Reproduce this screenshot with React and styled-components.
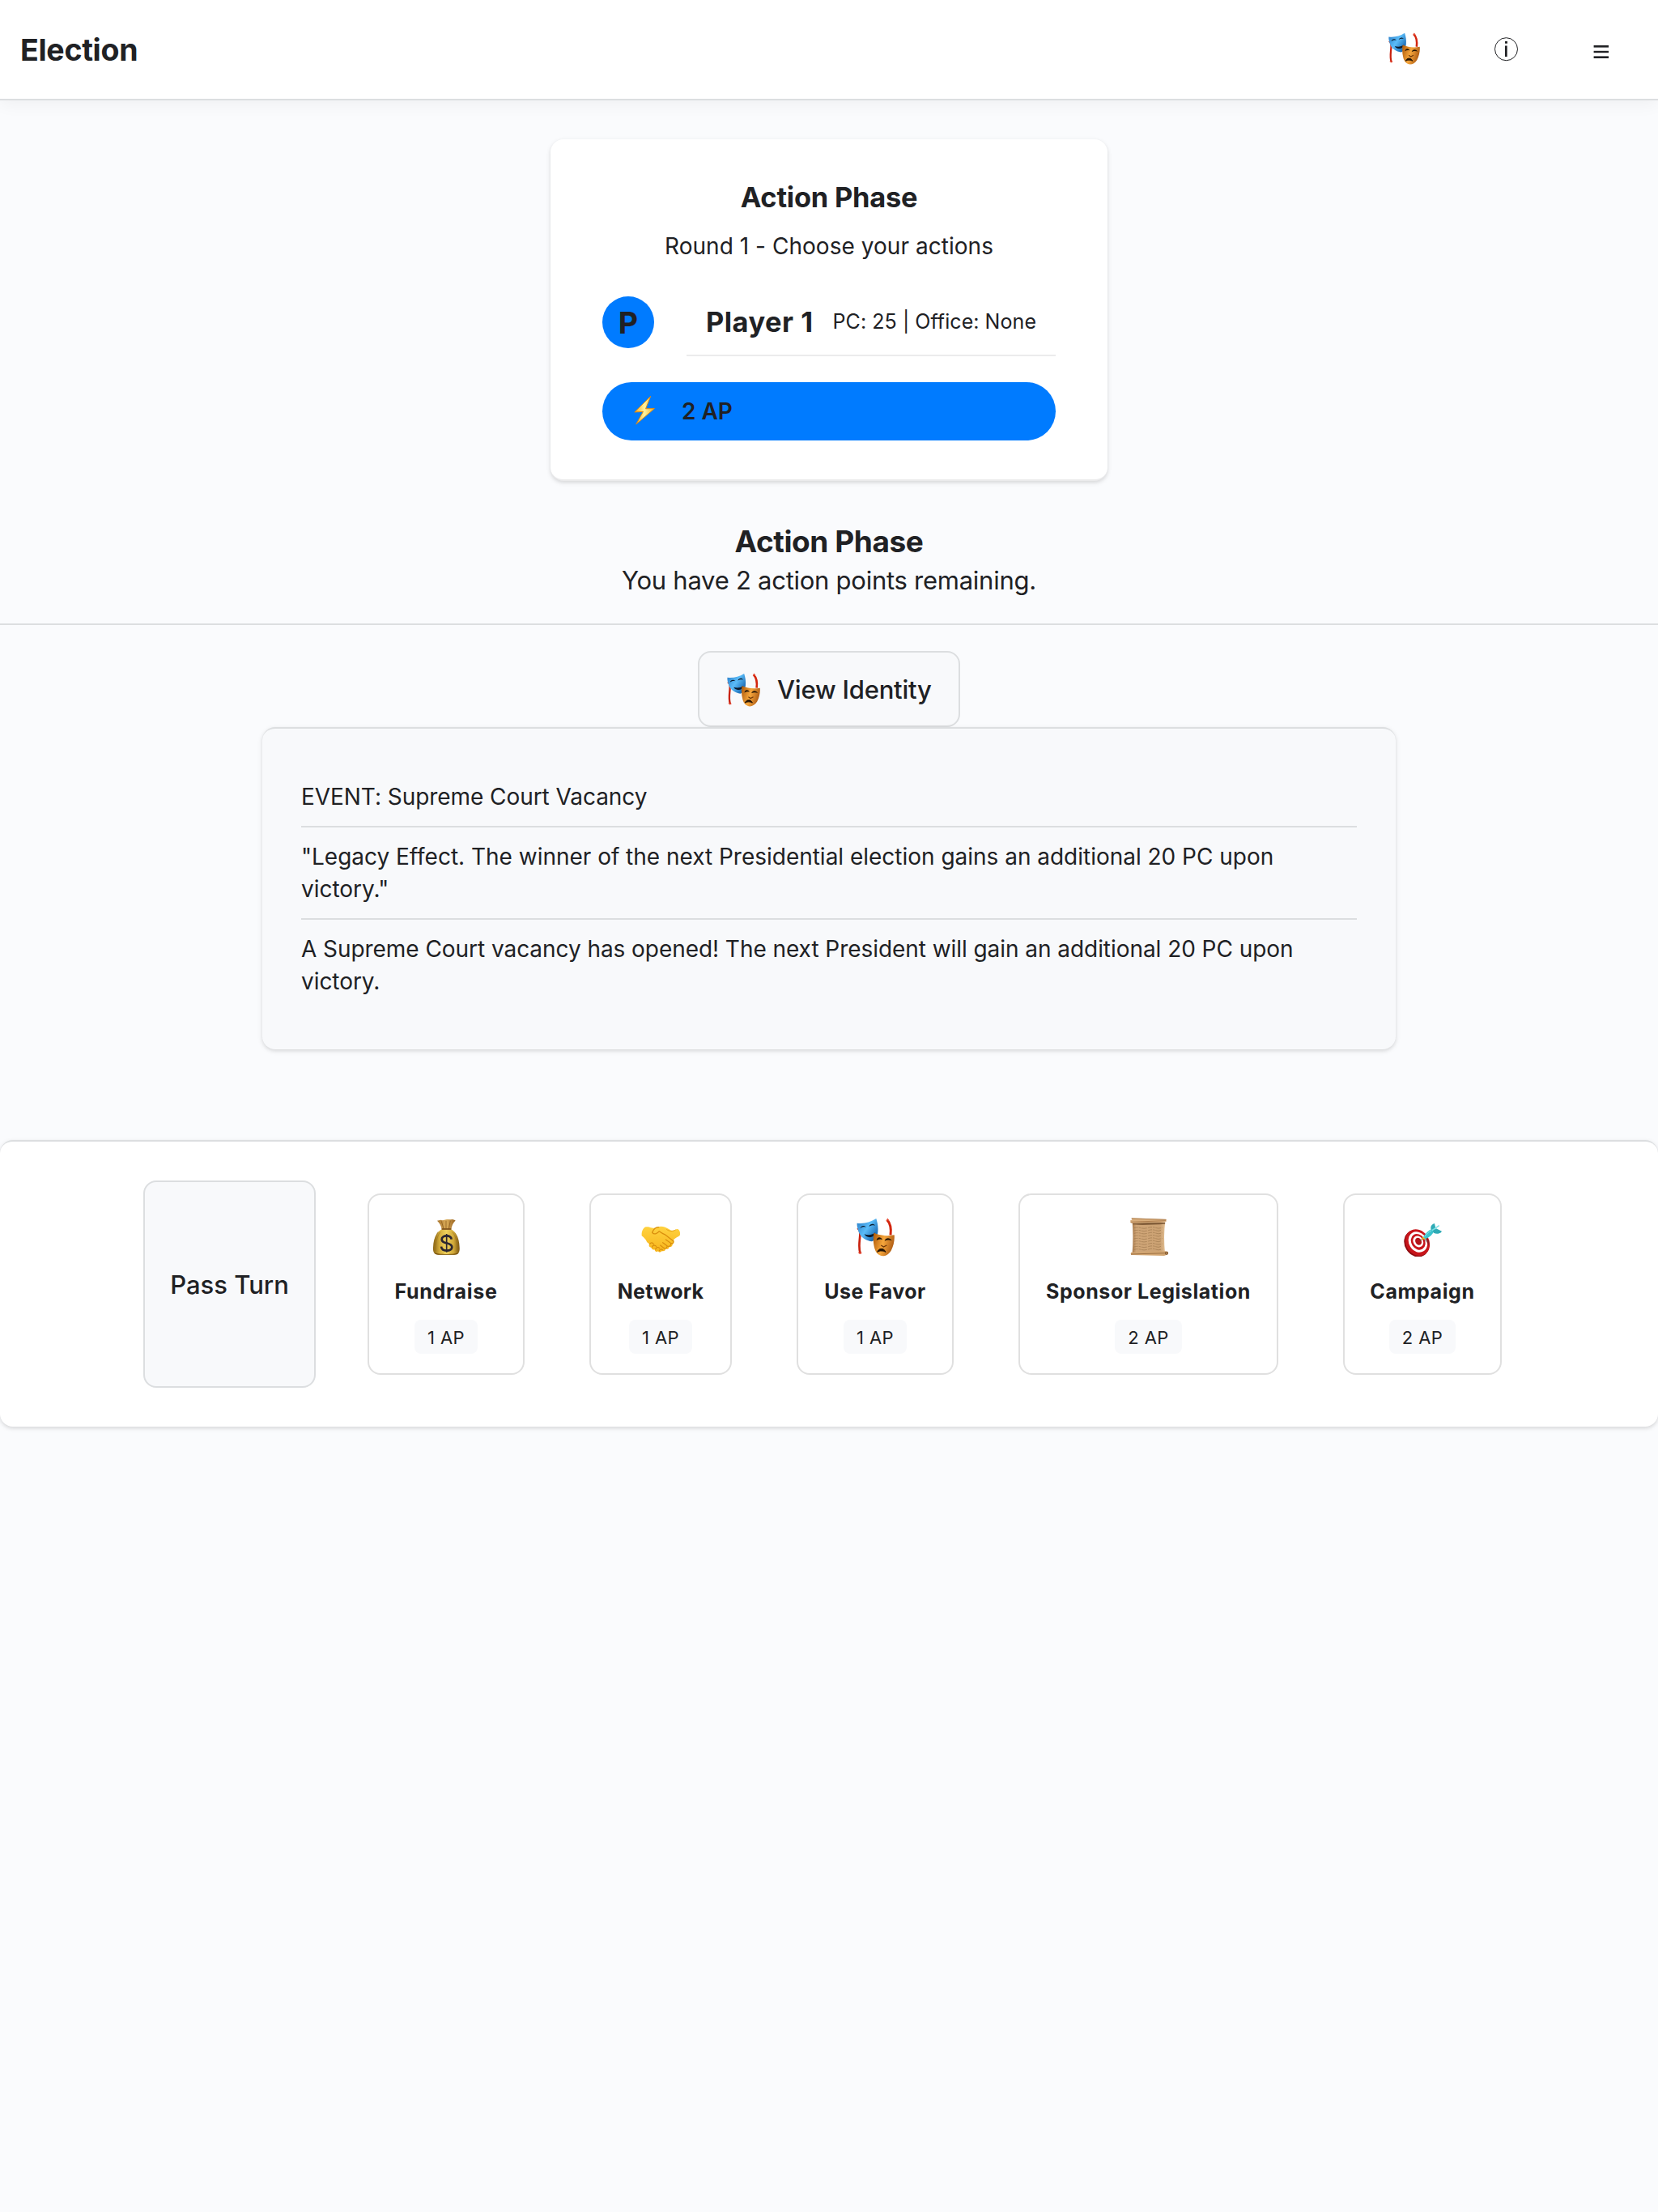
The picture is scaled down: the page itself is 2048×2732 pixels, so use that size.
import React from "react";
import styled, { createGlobalStyle } from "styled-components";

const color = {
  ink: "#202124",
  page: "#fafbfd",
  surface: "#ffffff",
  muted: "#f8f9fb",
  line: "#dcdee0",
  soft: "#ebebec",
  blue: "#007bff",
};

const raised = "0 2px 6px rgba(0, 0, 0, 0.1), 0 2px 4px rgba(0, 0, 0, 0.06)";

const GlobalStyle = createGlobalStyle`
  * { box-sizing: border-box; }
  body {
    margin: 0;
    background: ${color.page};
    color: ${color.ink};
    font-family: Inter, "Liberation Sans", sans-serif;
  }
  h1, h2, h3, p, ul { margin: 0; padding: 0; }
  svg { display: block; flex: none; }
`;

const Page = styled.div`
  min-height: 2732px;
  display: flex;
  flex-direction: column;
  align-items: center;
`;

/* ---------- header ---------- */

const Header = styled.header`
  width: 100%;
  height: 124px;
  display: flex;
  align-items: center;
  justify-content: space-between;
  padding: 0 60px 0 25px;
  background: ${color.surface};
  border-bottom: 2px solid ${color.line};
  box-shadow: 0 4px 20px rgba(0, 0, 0, 0.05);
`;

const Brand = styled.h1`
  padding-top: 2px;
  font-size: 37.5px;
  font-weight: 700;
  line-height: 50px;
  letter-spacing: -0.3px;
`;

const HeaderActions = styled.nav`
  display: flex;
  align-items: center;
  gap: 92px;
`;

const IconButton = styled.button`
  display: flex;
  padding: 0 0 ${(p) => p.$lift || 0}px;
  border: 0;
  background: none;
  color: inherit;
`;

/* ---------- phase card ---------- */

const PhaseCard = styled.section`
  width: 688px;
  margin-top: 48px;
  padding: 48px 64px;
  display: flex;
  flex-direction: column;
  background: ${color.surface};
  border-bottom: 2px solid ${color.soft};
  border-radius: 16px;
  box-shadow: ${raised};
`;

const PhaseTitle = styled.h2`
  font-size: 34.4px;
  font-weight: 700;
  line-height: 47px;
  letter-spacing: -0.2px;
  text-align: center;
`;

const PhaseSubtitle = styled.p`
  margin-top: 17px;
  font-size: 28px;
  line-height: 40px;
  letter-spacing: 0.04px;
  text-align: center;
`;

const PlayerRow = styled.div`
  margin-top: 32px;
  height: 84px;
  display: flex;
  align-items: center;
  gap: 40px;
`;

const Avatar = styled.div`
  width: 64px;
  height: 64px;
  display: flex;
  align-items: center;
  justify-content: center;
  border-radius: 50%;
  background: ${color.blue};
  font-size: 37.5px;
  font-weight: 700;
`;

const PlayerInfo = styled.div`
  flex: 1;
  height: 84px;
  padding-left: 24px;
  display: flex;
  align-items: center;
  gap: 23px;
  border-bottom: 2px solid ${color.soft};
  white-space: nowrap;
`;

const PlayerName = styled.span`
  font-size: 34.4px;
  font-weight: 700;
  line-height: 47px;
  letter-spacing: 0.5px;
`;

const PlayerStats = styled.span`
  padding-left: 1px;
  font-size: 25px;
  line-height: 36px;
  letter-spacing: 0.06px;
`;

const PointsPill = styled.div`
  margin-top: 32px;
  height: 72px;
  padding-left: 39px;
  display: flex;
  align-items: center;
  gap: 33px;
  border-radius: 36px;
  background: ${color.blue};
  font-size: 28px;
  font-weight: 600;
`;

/* ---------- message ---------- */

const Message = styled.section`
  width: 100%;
  padding: 51px 0 29px;
  border-bottom: 2px solid ${color.line};
  text-align: center;
`;

const MessageTitle = styled.h2`
  font-size: 37px;
  font-weight: 700;
  line-height: 48px;
  letter-spacing: -0.42px;
`;

const MessageText = styled.p`
  font-size: 31px;
  line-height: 48px;
  letter-spacing: -0.26px;
`;

const IdentityButton = styled.button`
  width: 324px;
  height: 94px;
  margin-top: 32px;
  padding: 1px 0 0 33px;
  display: flex;
  align-items: center;
  gap: 21px;
  border: 2px solid ${color.line};
  border-radius: 16px;
  background: ${color.muted};
  color: inherit;
  font: 500 31px/44px Inter, "Liberation Sans", sans-serif;
  letter-spacing: -0.2px;
`;

/* ---------- event log ---------- */

const EventPanel = styled.section`
  width: 1400px;
  padding: 48px;
  border-top: 2px solid ${color.line};
  border-radius: 16px;
  background: ${color.muted};
  box-shadow: ${raised};
`;

const EventEntry = styled.p`
  padding: 16px 0;
  font-size: 28px;
  line-height: 40px;
  letter-spacing: ${(p) => p.$tracking}px;
  & + & { border-top: 2px solid ${color.line}; }
`;

/* ---------- action bar ---------- */

const ActionBar = styled.footer`
  width: 100%;
  margin-top: 112px;
  padding: 48px 0;
  display: flex;
  justify-content: center;
  gap: 64px;
  border-top: 2px solid ${color.line};
  border-radius: 16px;
  background: ${color.surface};
  box-shadow: ${raised};
`;

const PassButton = styled.button`
  width: 213px;
  height: 256px;
  padding: 2px 0 0;
  border: 2px solid ${color.line};
  border-radius: 16px;
  background: ${color.muted};
  color: inherit;
  font: 500 31px/44px Inter, "Liberation Sans", sans-serif;
`;

const ActionList = styled.div`
  display: flex;
  align-items: center;
  gap: 80px;
  padding-right: 16px;
`;

const ActionCard = styled.button`
  width: ${(p) => p.$width}px;
  height: 224px;
  padding: 28px 0 24px;
  display: flex;
  flex-direction: column;
  align-items: center;
  border: 2px solid #e0e0e0;
  border-radius: 16px;
  background: ${color.surface};
  color: inherit;
  font-family: inherit;
`;

const ActionName = styled.span`
  margin-top: 25px;
  font-size: 25px;
  font-weight: 700;
  line-height: 36px;
  letter-spacing: ${(p) => p.$tracking}px;
  white-space: nowrap;
`;

const ActionCost = styled.span`
  height: 42px;
  margin-top: 17px;
  padding: 0 16px;
  border-radius: 8px;
  background: ${color.muted};
  font-size: 22px;
  line-height: 44px;
  letter-spacing: 0.45px;
`;

/* ---------- drawings ---------- */

function Masks({ size = 48, id }) {
  return (
    <svg width={size} height={size} viewBox="0 0 144 144" fill="none">
      <defs>
        <linearGradient id={`${id}-b`} x1="0.1" y1="0.1" x2="0.9" y2="0.7">
          <stop offset="0" stopColor="#2f86cf" />
          <stop offset="0.5" stopColor="#5bbcf8" />
          <stop offset="1" stopColor="#1f6fb8" />
        </linearGradient>
        <linearGradient id={`${id}-o`} x1="0" y1="0.3" x2="1" y2="0.6">
          <stop offset="0" stopColor="#b8630f" />
          <stop offset="0.45" stopColor="#f5a63c" />
          <stop offset="1" stopColor="#a85510" />
        </linearGradient>
      </defs>
      <path d="M7 44c6-6 10 6 9 20-1 24-7 44 1 68" stroke="#c9220f" strokeWidth="8" />
      <path d="M10 128l6 5 6-3" stroke="#e8523c" strokeWidth="4" />
      <path d="M116 8c10 10 16 32 13 56" stroke="#d3260f" strokeWidth="9" />
      <path d="M114 12l4-7 5 6" stroke="#e8523c" strokeWidth="4" />
      <path d="M5 20c26 3 48-3 71-17 5 16 8 32 6 50-2 18-11 31-22 35C39 85 17 73 10 50 7 40 4 30 5 20z" fill={`url(#${id}-b)`} />
      <path d="M16 40c3-11 15-14 23-5-9-2-16-1-23 5zM49 33c4-11 17-13 23-4-8-2-16-1-23 4z" fill="#0b1a2c" />
      <path d="M32 61c14 5 29 3 41-6-3 13-13 19-24 17-8-1-14-5-17-11z" fill="#0b1a2c" />
      <path d="M67 56c24 10 49 13 76 8 2 18-3 42-12 58-8 13-20 20-31 20-13-1-25-10-30-28-5-19-6-39-3-58z" fill={`url(#${id}-o)`} />
      <path d="M77 84c2-13 15-15 22-3-8-3-15-2-22 3zM107 86c5-13 19-13 27-1-9-3-18-3-27 1z" fill="#241405" />
      <path d="M94 102l9 6 12-6" stroke="#6d3508" strokeWidth="4" />
      <path d="M80 127c5-15 24-17 31 0-9-5-21-6-31 0z" fill="#241405" stroke="#241405" strokeWidth="3" />
    </svg>
  );
}

function MoneyBag() {
  return (
    <svg width="48" height="48" viewBox="0 0 144 144" fill="none">
      <defs>
        <linearGradient id="bag" x1="0" x2="1">
          <stop offset="0" stopColor="#8a6414" />
          <stop offset="0.25" stopColor="#d5ae3c" />
          <stop offset="0.5" stopColor="#f0d25c" />
          <stop offset="0.78" stopColor="#cfa637" />
          <stop offset="1" stopColor="#7c5510" />
        </linearGradient>
        <linearGradient id="neck" x1="0" x2="1">
          <stop offset="0" stopColor="#a5712a" />
          <stop offset="0.5" stopColor="#dcae5a" />
          <stop offset="1" stopColor="#96601d" />
        </linearGradient>
      </defs>
      <path d="M39 11l13-3 8 2 14-4 14 1 8-1 11 4c-9 9-14 20-16 33H56C54 30 48 20 39 11z" fill="url(#neck)" />
      <path d="M55 13l8 28M72 11v30M88 11l-6 30" stroke="#8d5d1e" strokeWidth="2.5" />
      <path d="M56 43c-20 11-31 32-32 68-1 18 5 26 20 26h58c15 0 21-8 20-26-1-36-12-57-31-68z" fill="url(#bag)" />
      <path d="M50 54C38 70 33 95 33 124M96 54c13 16 18 40 17 70M42 52c-6 12-12 30-13 52" stroke="#8f6a1a" strokeWidth="2" opacity="0.7" />
      <path d="M29 129c9 8 81 8 89 0-3 7-8 8-16 8H44c-8 0-13-2-15-8z" fill="#76500f" />
      <path d="M56 42h35" stroke="#7c4d17" strokeWidth="5" />
      <path d="M92 80c-1-9-9-13-18-13-10 0-18 5-18 13 0 9 8 12 18 14 11 3 20 6 20 15 0 8-9 13-20 13s-19-6-20-15" stroke="#2c2630" strokeWidth="8" />
      <path d="M74 60v68" stroke="#2c2630" strokeWidth="5" />
    </svg>
  );
}

function Handshake() {
  return (
    <svg width="48" height="48" viewBox="0 0 144 144" fill="none" strokeLinecap="round" strokeLinejoin="round">
      <defs>
        <linearGradient id="hands" x1="0" y1="0" x2="0" y2="1">
          <stop offset="0" stopColor="#ffd23f" />
          <stop offset="1" stopColor="#f7b51c" />
        </linearGradient>
      </defs>
      <path d="M17 34C6 38 1 52 2 67c8 6 14 12 19 22 3 4 7 6 9 8-3 6 0 13 8 13-1 6 5 10 12 8 0 7 7 10 13 6 2 5 9 5 13 0l5 0c6-1 9-4 9-8 8 2 14-2 14-8 8 1 13-4 12-10 6-4 8-9 4-16 5-6 13-10 20-14 6-3 5-12 2-19-3-6-7-8-12-6-8 6-19 6-26 0-9-6-20-11-31-11-9 0-17 2-24 6-8 1-15-1-22-4z" fill="url(#hands)" />
      <path d="M65 35c-13 0-20 9-24 20 8 10 20 2 26-5 6 7 14 8 22 13l30 23" stroke="#d98e0d" strokeWidth="4" />
      <path d="M118 85c4 9-2 13-9 9L91 81M110 97c0 9-8 11-14 7L80 92M96 106c-1 8-8 10-14 5L71 102" stroke="#d98e0d" strokeWidth="3.5" />
      <path d="M32 97c5-7 11-5 14 1M40 109c3-8 11-9 16-3M53 117c2-8 10-10 15-4M67 122c2-5 8-7 12-3" stroke="#d98e0d" strokeWidth="3.5" />
      <path d="M95 44c9 7 22 8 32 1" stroke="#e6a31a" strokeWidth="3" />
    </svg>
  );
}

function Scroll() {
  const lines = [36, 46, 56, 66, 76, 86, 96, 106, 116];
  return (
    <svg width="48" height="48" viewBox="0 0 144 144" fill="none">
      <defs>
        <linearGradient id="paper" x1="0" x2="1">
          <stop offset="0" stopColor="#a97a4b" />
          <stop offset="0.12" stopColor="#cfa577" />
          <stop offset="0.85" stopColor="#cca273" />
          <stop offset="1" stopColor="#e3c094" />
        </linearGradient>
      </defs>
      <path d="M11 14h122c-5 38-5 75-1 116H11c3-40 3-78 0-116z" fill="url(#paper)" />
      <path d="M11 18h122l-1 5c-40 2-80 6-119 2z" fill="#5c3b1c" opacity="0.65" />
      {lines.map((y, i) => (
        <path key={y} d={`M17 ${y + 2}q14-4 26 0t27-1 27 0 ${i % 2 ? 20 : 26}-1`} stroke="#8e6a43" strokeWidth="2.5" strokeDasharray="15 3 8 2 21 4" opacity="0.6" />
      ))}
      <path d="M8 1l129 5v8L10 21l-6-3V9l6-1z" fill="#d9ae7c" />
      <path d="M8 3l128 4M5 16l130-5" stroke="#a37345" strokeWidth="2.5" />
      <path d="M7 128l127-4 9 2v9l-8 4-6 2-122-3-2-5z" fill="#d3a672" />
      <path d="M6 135l128-4" stroke="#8f6438" strokeWidth="2.5" />
      <circle cx="138" cy="131" r="6" fill="#7a5028" />
      <circle cx="138" cy="131" r="2.5" fill="#d6ad7b" />
    </svg>
  );
}

function Target() {
  return (
    <svg width="48" height="48" viewBox="0 0 144 144" fill="none">
      <g transform="rotate(-32 54 92)">
        <ellipse cx="49" cy="93" rx="44" ry="52" fill="#8f0d12" />
        <ellipse cx="54" cy="92" rx="43" ry="51" fill="#c8151b" />
        <ellipse cx="56" cy="91" rx="33" ry="40" fill="#fff" />
        <ellipse cx="57" cy="91" rx="25" ry="31" fill="#c8151b" />
        <ellipse cx="58" cy="90" rx="18" ry="22" fill="#fff" />
        <ellipse cx="59" cy="90" rx="11" ry="14" fill="#b31319" />
      </g>
      <path d="M75 82c9 3 17 11 20 22 4-12 1-24-9-32z" fill="#4a1a1c" opacity="0.45" />
      <path d="M62 87l12-11" stroke="#6b5520" strokeWidth="3" />
      <path d="M70 81l3-11 11 8z" fill="#e9b820" />
      <path d="M75 72c6-11 17-24 31-30l9 8c-6 13-17 23-31 28z" fill="#3cc3cd" />
      <path d="M104 43c-4-10 3-20 13-22l4 18-8 10zM110 49l13-9 21 10c-5 10-21 12-30 6z" fill="#2fabb6" />
      <path d="M108 47l26-18" stroke="#7fe0e6" strokeWidth="5" />
      <path d="M80 70c7-9 15-17 25-23" stroke="#8ae6ec" strokeWidth="3" />
    </svg>
  );
}

function Bolt() {
  return (
    <svg width="26" height="38" viewBox="0 0 26 38">
      <defs>
        <linearGradient id="bolt" x1="0" x2="1">
          <stop offset="0" stopColor="#f9a51a" />
          <stop offset="0.5" stopColor="#fff3a0" />
          <stop offset="1" stopColor="#f9b021" />
        </linearGradient>
      </defs>
      <path d="M20.6.5L.8 20l10.6-.6L2.8 35 25.4 15.6l-10.8.2z" fill="url(#bolt)" stroke="#e08a12" strokeWidth="1" strokeLinejoin="round" />
    </svg>
  );
}

function InfoIcon() {
  return (
    <svg width="30" height="40" viewBox="0 0 30 40" fill={color.ink}>
      <circle cx="14.5" cy="19.7" r="14" fill="none" stroke={color.ink} strokeWidth="1" />
      <rect x="13" y="10" width="3" height="2.7" />
      <rect x="13" y="15.5" width="2.7" height="13.5" />
    </svg>
  );
}

function MenuIcon() {
  return (
    <svg width="20" height="40" viewBox="0 0 20 40" fill={color.ink}>
      <rect x="0.6" y="15" width="18.4" height="2.6" />
      <rect x="0.6" y="21.8" width="18.4" height="2.4" />
      <rect x="0.6" y="28.4" width="18.4" height="2.6" />
    </svg>
  );
}

/* ---------- content ---------- */

const events = [
  { text: "EVENT: Supreme Court Vacancy", tracking: -0.06 },
  { text: "\"Legacy Effect. The winner of the next Presidential election gains an additional 20 PC upon victory.\"", tracking: -0.016 },
  { text: "A Supreme Court vacancy has opened! The next President will gain an additional 20 PC upon victory.", tracking: -0.055 },
];

const actions = [
  { name: "Fundraise", cost: 1, icon: <MoneyBag />, width: 194, tracking: 0.7 },
  { name: "Network", cost: 1, icon: <Handshake />, width: 176, tracking: 0.22 },
  { name: "Use Favor", cost: 1, icon: <Masks id="favor" />, width: 194, tracking: 0.42 },
  { name: "Sponsor Legislation", cost: 2, icon: <Scroll />, width: 321, tracking: 0.56 },
  { name: "Campaign", cost: 2, icon: <Target />, width: 196, tracking: 0.6 },
];

export default function App() {
  return (
    <Page>
      <GlobalStyle />
      <Header>
        <Brand>Election</Brand>
        <HeaderActions>
          <IconButton $lift={2} aria-label="Identity"><Masks size={40} id="head" /></IconButton>
          <IconButton aria-label="Information"><InfoIcon /></IconButton>
          <IconButton aria-label="Menu"><MenuIcon /></IconButton>
        </HeaderActions>
      </Header>

      <PhaseCard>
        <PhaseTitle>Action Phase</PhaseTitle>
        <PhaseSubtitle>Round 1 - Choose your actions</PhaseSubtitle>
        <PlayerRow>
          <Avatar>P</Avatar>
          <PlayerInfo>
            <PlayerName>Player 1</PlayerName>
            <PlayerStats>PC: 25 | Office: None</PlayerStats>
          </PlayerInfo>
        </PlayerRow>
        <PointsPill><Bolt />2 AP</PointsPill>
      </PhaseCard>

      <Message>
        <MessageTitle>Action Phase</MessageTitle>
        <MessageText>You have 2 action points remaining.</MessageText>
      </Message>

      <IdentityButton><Masks size={42} id="view" />View Identity</IdentityButton>

      <EventPanel>
        {events.map((e) => <EventEntry key={e.text} $tracking={e.tracking}>{e.text}</EventEntry>)}
      </EventPanel>

      <ActionBar>
        <PassButton>Pass Turn</PassButton>
        <ActionList>
          {actions.map((a) => (
            <ActionCard key={a.name} $width={a.width}>
              {a.icon}
              <ActionName $tracking={a.tracking}>{a.name}</ActionName>
              <ActionCost>{a.cost} AP</ActionCost>
            </ActionCard>
          ))}
        </ActionList>
      </ActionBar>
    </Page>
  );
}
